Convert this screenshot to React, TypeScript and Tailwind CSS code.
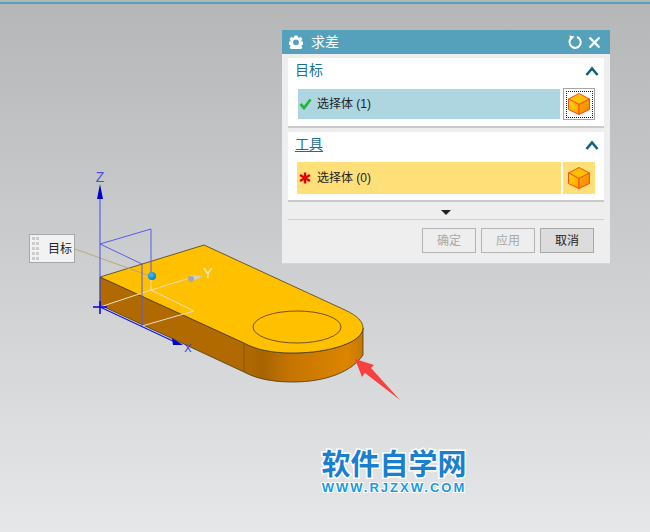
import React from 'react';

const CubeIcon: React.FC<{ id: string }> = ({ id }) => (
    <svg width="24" height="24" viewBox="0 0 24 24">
        <defs>
            <linearGradient id={`${id}-l`} x1="0" y1="0" x2="1" y2="1">
                <stop offset="0" stopColor="#ffe000" />
                <stop offset="1" stopColor="#ff9a00" />
            </linearGradient>
            <linearGradient id={`${id}-r`} x1="0" y1="0" x2="1" y2="1">
                <stop offset="0" stopColor="#ffb400" />
                <stop offset="1" stopColor="#f57a00" />
            </linearGradient>
        </defs>
        <path d="M12 1.5 L22.5 7 L12 12.5 L1.5 7 Z" fill="#ffc000" stroke="#f2501e" strokeWidth="1" strokeLinejoin="round" />
        <path d="M1.5 7 L12 12.5 V22.5 L1.5 17.5 Z" fill={`url(#${id}-l)`} stroke="#f2501e" strokeWidth="1" strokeLinejoin="round" />
        <path d="M22.5 7 L12 12.5 V22.5 L22.5 17.5 Z" fill={`url(#${id}-r)`} stroke="#f2501e" strokeWidth="1" strokeLinejoin="round" />
    </svg>
);

const GearIcon = () => (
    <svg width="14" height="14" viewBox="0 0 24 24" fill="#ffffff">
        <path
            fillRule="evenodd"
            d="M9.500 1h5l.5 3 2 .9 2.600-1.700 3.400 3.400-1.700 2.600.9 2 2.800.500v5l-2.800.5-.9 2 1.700 2.600-3.400 3.400-2.600-1.700-2 .9-.5 2.800h-5l-.5-2.800-2-.9-2.600 1.700-3.400-3.400 1.700-2.600-.9-2-2.800-.5v-5l2.800-.5.9-2-1.700-2.600 3.400-3.400 2.600 1.700 2-.9Z M12 7.500a5 5 0 1 0 0 10 5 5 0 0 0 0-10Z"
        />
    </svg>
);

const RefreshIcon = () => (
    <svg width="16" height="16" viewBox="0 0 16 16" fill="none" className="ml-auto">
        <path d="M10 3 A5.600 5.600 0 1 1 4.500 4" stroke="#ffffff" strokeWidth="2" />
        <path d="M2.500 1.500 L7.500 2.500 L3 7 Z" fill="#ffffff" />
    </svg>
);

const CloseIcon = () => (
    <svg width="13" height="13" viewBox="0 0 13 13" fill="none">
        <path d="M1.500 1.500 L11.500 11.500 M11.500 1.500 L1.500 11.500" stroke="#ffffff" strokeWidth="2.400" />
    </svg>
);

const ChevronIcon = () => (
    <svg width="14" height="10" viewBox="0 0 14 10" fill="none">
        <path d="M1.500 9 L7 2.500 L12.500 9" stroke="#10607f" strokeWidth="2.600" />
    </svg>
);

const CheckIcon = () => (
    <svg width="13" height="12" viewBox="0 0 13 12" fill="none">
        <path d="M1.500 6 L5 10 L11.500 1.500" stroke="#1fb83a" strokeWidth="2.800" />
    </svg>
);

const StarIcon = () => (
    <svg width="12" height="12" viewBox="0 0 12 12" fill="none">
        <path d="M6 0.500 V11.500 M1 3 L11 9 M11 3 L1 9" stroke="#e00000" strokeWidth="2.400" />
    </svg>
);

const Section: React.FC<{ title: string; underline?: boolean; children: React.ReactNode }> = ({ title, underline, children }) => (
    <div className="h-[70px] bg-white border-b-2 border-[#c9c9c9] mb-1 pl-[7px] pr-[5px]">
        <div className="flex h-[26px] items-center justify-between pb-[1px] mb-1">
            <span className={`text-[14px] text-[#1a6f96] ${underline ? 'underline underline-offset-2' : ''}`}>{title}</span>
            <ChevronIcon />
        </div>
        {children}
    </div>
);

const Scene = () => (
    <svg className="absolute left-0 top-0" width="650" height="532" viewBox="0 0 650 532">
        <defs>
            <linearGradient id="side" gradientUnits="userSpaceOnUse" x1="100" y1="0" x2="363" y2="0">
                <stop offset="0" stopColor="#b06a00" />
                <stop offset="0.54" stopColor="#b06a00" />
                <stop offset="0.62" stopColor="#a86400" />
                <stop offset="0.72" stopColor="#c47500" />
                <stop offset="0.94" stopColor="#dc8500" />
                <stop offset="1" stopColor="#c67800" />
            </linearGradient>
            <radialGradient id="ball" cx="0.4" cy="0.35" r="0.7">
                <stop offset="0" stopColor="#40c0ff" />
                <stop offset="1" stopColor="#0078c8" />
            </radialGradient>
        </defs>
        <path
            d="M100 277 L244 343 C255 349 270 353 293 353 C330 353 363 342 363 328 L363 355 C352 372 325 382 293 382 C270 382 255 378 244 372 L100 305 Z"
            fill="url(#side)"
            stroke="#4a3a20"
            strokeWidth="0.8"
        />
        <path
            d="M100 277 L204 245 L345 310 C358 316 363 322 363 328 C363 342 330 353 293 353 C270 353 255 349 244 343 Z"
            fill="#ffc000"
            stroke="#4a3a20"
            strokeWidth="0.8"
        />
        <line x1="244" y1="343" x2="244" y2="372" stroke="#8a5500" strokeWidth="1" />
        <ellipse cx="297" cy="327" rx="44" ry="16" fill="none" stroke="#4a3a20" strokeWidth="0.8" />

        {/* leader and whitish datum lines */}
        <line x1="75" y1="249" x2="150" y2="276" stroke="#b9a878" strokeWidth="1" />
        <path d="M100 307 L151 290 L190 278 M151 276 V290 L194 311 L142 326" fill="none" stroke="#e8e0c8" strokeWidth="1" />
        <path d="M190 275 L203 276 L191 282 Z" fill="#d0d0d0" />
        <circle cx="191" cy="279" r="3" fill="#a8a8a8" />

        {/* blue frame and axes */}
        <path d="M100 244 L151 229 V276 M100 244 L142 264 V326" fill="none" stroke="#5a5af0" strokeWidth="1" />
        <line x1="100" y1="196" x2="100" y2="307" stroke="#4a4ae8" strokeWidth="1" />
        <path d="M100 184 L103 199 H97 Z" fill="#0000d0" />
        <path d="M93 307 H107 M100 301 V314" stroke="#0000e0" strokeWidth="1.500" />
        <line x1="100" y1="307" x2="175" y2="342" stroke="#1010e8" strokeWidth="1.200" />
        <path d="M183 345 L172 338 L173 345 Z" fill="#0000d0" />
        <circle cx="152" cy="276" r="4" fill="url(#ball)" />

        <text x="100" y="182" textAnchor="middle" fontSize="14" fontFamily="Liberation Sans, sans-serif" fill="#4a4ae8">Z</text>
        <text x="188" y="352" textAnchor="middle" fontSize="11" fontFamily="Liberation Sans, sans-serif" fill="#3a3ae0">X</text>
        <text x="208" y="278" textAnchor="middle" fontSize="15" fontFamily="Liberation Sans, sans-serif" fill="#f0ead8">Y</text>

        {/* red callout arrow */}
        <path d="M355 359 L374 365 L371 368 L400 400 L365 373 L362 377 Z" fill="#f84040" />
    </svg>
);

const App: React.FC = () => {
    return (
        <div className="relative h-[532px] w-[650px] overflow-hidden bg-gradient-to-b from-[#b5b6b8] to-[#e6e7e9] font-['Liberation_Sans','Noto_Sans_CJK_SC',sans-serif]">
            <div className="mt-[2px] h-[2px] bg-[#55a0bb]" />

            <Scene />

            <div className="absolute left-[29px] top-[234px] flex h-[29px] w-[46px] items-center border border-[#a8a8a8] bg-[#f2f2f2] pl-[2px]">
                <div className="grid grid-cols-2 gap-x-[1px] gap-y-[2px]">
                    {Array.from({ length: 10 }).map((_, i) => (
                        <span key={i} className="h-[3px] w-[3px] bg-[#cccccc]" />
                    ))}
                </div>
                <span className="ml-[9px] text-[12px] text-[#222222]">目标</span>
            </div>

            <div className="absolute left-[282px] top-[30px] w-[328px] h-[234px] bg-[#eeeeee] border-b border-[#d6d6d6]">
                <div className="flex h-6 items-center bg-[#55a0bb] pl-[7px] pr-[9px] text-white">
                    <GearIcon />
                    <span className="ml-[8px] text-[14px]">求差</span>
                    <RefreshIcon />
                    <span className="w-[5px]" />
                    <CloseIcon />
                </div>

                <div className="px-[6px] pt-1">
                    <Section title="目标">
                        <div className="flex items-center">
                            <div className="ml-[3px] flex h-[30px] w-[262px] items-center bg-[#aed6e1] text-[12px] text-[#222222]">
                                <span className="ml-[1px] mr-[5px] flex"><CheckIcon /></span>
                                选择体 (1)
                            </div>
                            <div className="ml-[3px] flex h-8 w-8 items-center justify-center border border-[#a6a6a6] bg-white">
                                <div className="flex h-[27px] w-[27px] items-center justify-center border border-dotted border-[#222222]">
                                    <CubeIcon id="cube-a" />
                                </div>
                            </div>
                        </div>
                    </Section>

                    <Section title="工具" underline>
                        <div className="flex items-center">
                            <div className="ml-[2px] flex h-8 w-[264px] items-center bg-[#ffdf78] text-[12px] text-[#222222]">
                                <span className="ml-[2px] mr-[6px] flex"><StarIcon /></span>
                                选择体 (0)
                            </div>
                            <div className="ml-[2px] flex h-8 w-8 items-center justify-center bg-[#ffdf78]">
                                <CubeIcon id="cube-b" />
                            </div>
                        </div>
                    </Section>

                    <div className="flex h-[14px] items-center justify-center border-b border-[#d0d0d0]">
                        <div className="h-0 w-0 border-x-[5px] border-t-[5px] border-x-transparent border-t-[#222222]" />
                    </div>

                    <div className="flex justify-end gap-[5px] pr-[10px] pt-[8px]">
                        <div className="flex h-[25px] w-[54px] items-center justify-center border border-[#b4b4b4] text-[12px] text-[#a8a8a8]">确定</div>
                        <div className="flex h-[25px] w-[54px] items-center justify-center border border-[#b4b4b4] text-[12px] text-[#a8a8a8]">应用</div>
                        <div className="flex h-[25px] w-[54px] items-center justify-center border border-[#a8a8a8] bg-[#dcdcdc] text-[12px] text-[#222222]">取消</div>
                    </div>
                </div>
            </div>

            <div className="absolute left-[321px] top-[449px] w-[146px] text-center">
                <div className="text-[29px] font-bold leading-[33px] text-[#1a7fcf] [-webkit-text-stroke:3px_#ffffff] [paint-order:stroke_fill]">软件自学网</div>
                <div className="whitespace-nowrap text-[13px] font-bold leading-[11px] tracking-[2px] text-[#1a9be0] [-webkit-text-stroke:2px_#ffffff] [paint-order:stroke_fill]">WWW.RJZXW.COM</div>
            </div>
        </div>
    );
};

export default App;
